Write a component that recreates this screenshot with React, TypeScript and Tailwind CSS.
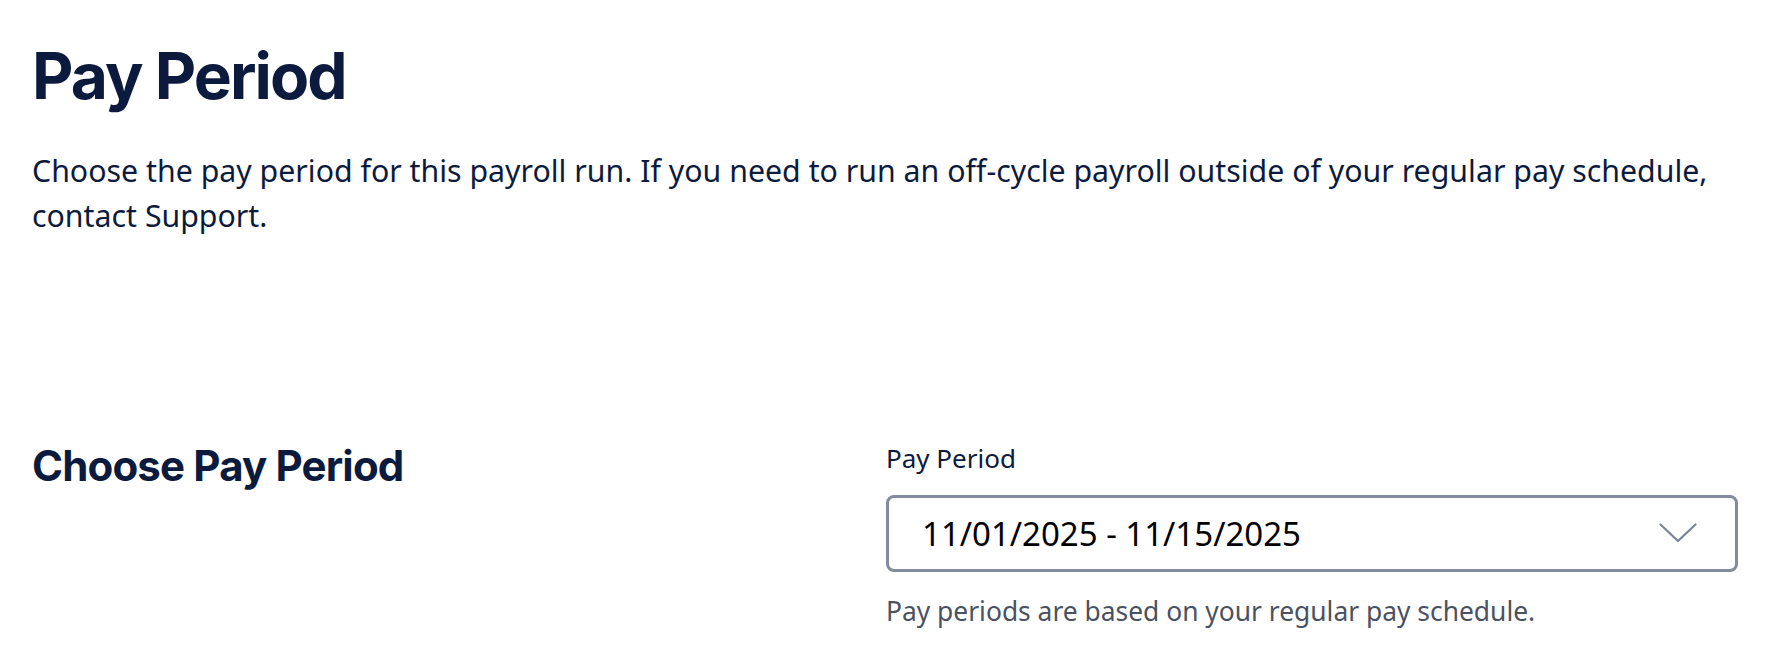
const body = { fontFamily: '"Noto Sans", Roboto, sans-serif' };
const heading = { fontFamily: 'Inter, "Noto Sans", sans-serif' };

function Chevron() {
  return (
    <svg width="38" height="20" viewBox="0 0 38 20" fill="none" className="shrink-0">
      <polyline points="1.5,1.5 19,18 36.5,1.5" stroke="#7b8394" strokeWidth="2.2" strokeLinecap="round" strokeLinejoin="round" />
    </svg>
  );
}

export default function App() {
  return (
    <div className="min-h-screen bg-white pl-8 pr-[36px] pt-[38px] text-[#0c1b3d]">
      <h1 className="text-[64px] font-bold leading-[1.2] tracking-[-0.03em]" style={heading}>
        Pay Period
      </h1>
      <p className="mt-[33px] max-w-[1712px] text-[30.3px] leading-[45px]" style={body}>
        Choose the pay period for this payroll run. If you need to run an off-cycle payroll outside of your regular pay
        schedule, contact Support.
      </p>

      <div className="mt-[202px] grid grid-cols-[854px_1fr]">
        <h2 className="text-[42px] font-bold leading-[1.25] tracking-[-0.02em]" style={heading}>
          Choose Pay Period
        </h2>
        <div style={body}>
          <label className="block text-[26px] leading-[36px]">Pay Period</label>
          <button className="mt-[19px] flex h-[77px] w-full items-center justify-between rounded-[8px] border-[3px] border-[#838b9c] bg-white pl-[33px] pr-[38px] text-left text-[33px] text-black">
            <span>11/01/2025 - 11/15/2025</span>
            <Chevron />
          </button>
          <p className="mt-[21px] text-[26.4px] leading-[36px] text-[#4a5262]">
            Pay periods are based on your regular pay schedule.
          </p>
        </div>
      </div>
    </div>
  );
}
